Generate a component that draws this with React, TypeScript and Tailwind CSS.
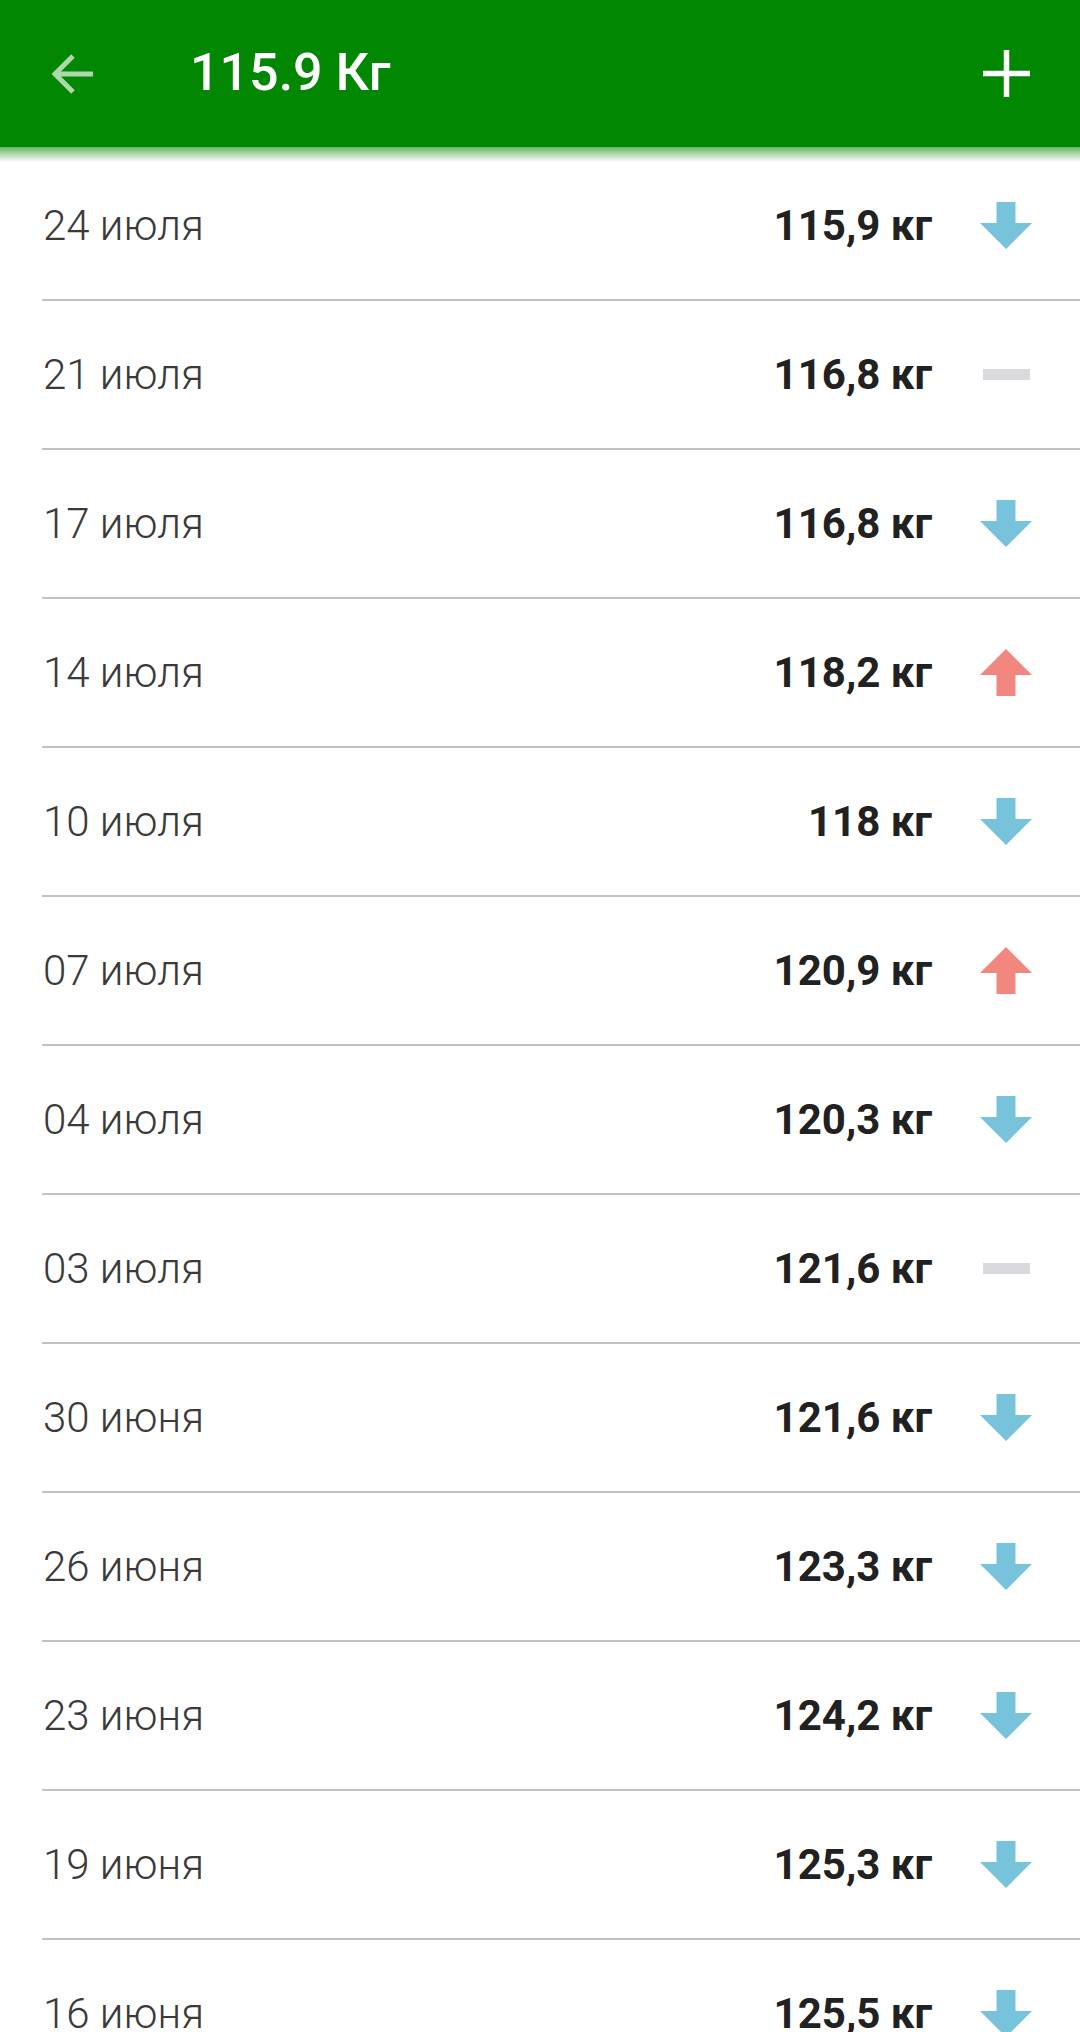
import React from 'react';

type Trend = 'down' | 'up' | 'same';

const entries: { date: string; weight: string; trend: Trend }[] = [
  { date: '24 июля', weight: '115,9 кг', trend: 'down' },
  { date: '21 июля', weight: '116,8 кг', trend: 'same' },
  { date: '17 июля', weight: '116,8 кг', trend: 'down' },
  { date: '14 июля', weight: '118,2 кг', trend: 'up' },
  { date: '10 июля', weight: '118 кг', trend: 'down' },
  { date: '07 июля', weight: '120,9 кг', trend: 'up' },
  { date: '04 июля', weight: '120,3 кг', trend: 'down' },
  { date: '03 июля', weight: '121,6 кг', trend: 'same' },
  { date: '30 июня', weight: '121,6 кг', trend: 'down' },
  { date: '26 июня', weight: '123,3 кг', trend: 'down' },
  { date: '23 июня', weight: '124,2 кг', trend: 'down' },
  { date: '19 июня', weight: '125,3 кг', trend: 'down' },
  { date: '16 июня', weight: '125,5 кг', trend: 'down' },
];

const TrendIcon: React.FC<{ trend: Trend }> = ({ trend }) => {
  if (trend === 'same') {
    return <div className="w-[47px] h-[11px] bg-[#d9d9de]" />;
  }
  // arrow is 52 wide, 47 tall: 19px stem, 45deg head
  return (
    <svg width="52" height="47" viewBox="0 0 52 47" className={trend === 'up' ? 'rotate-180' : ''}>
      <path d="M16.5 0 H35.5 V21 H52 L26 47 L0 21 H16.5 Z" fill={trend === 'up' ? '#f2877f' : '#78c3dc'} />
    </svg>
  );
};

export default function App() {
  return (
    <div className="w-[1080px] h-[2032px] overflow-hidden bg-white font-['Roboto',sans-serif]">
      <div className="relative z-10 h-[147px] bg-[#018701] flex items-center">
        <div className="w-[146px] h-full flex items-center justify-center">
          <svg width="42" height="42" viewBox="0 0 42 42" className="-ml-[1px]">
            <path d="M41 21 H4 M21 3 L3 21 L21 39" stroke="#ffffff" strokeOpacity="0.68" strokeWidth="5" fill="none" />
          </svg>
        </div>
        <h1 className="ml-[44px] text-[52px] font-medium text-white leading-none -mt-[1px]">115.9 Кг</h1>
        <div className="ml-auto mr-[50px] flex items-center">
          <svg width="47" height="47" viewBox="0 0 47 47">
            <path d="M23.5 0 V47 M0 23.5 H47" stroke="#ffffff" strokeWidth="5.5" fill="none" />
          </svg>
        </div>
        <div className="absolute left-0 right-0 top-full h-[15px] bg-gradient-to-b from-[#018701]/60 to-transparent" />
      </div>
      <div className="pt-[5px]">
        {entries.map((e, i) => (
          <div key={i}>
            <div className="h-[147px] flex items-center pl-[43px]">
              <span className="text-[42px] font-light text-[#3a3a3a] leading-none">{e.date}</span>
              <span className="ml-auto text-[42px] font-bold text-[#212121] leading-none">{e.weight}</span>
              <div className="w-[64px] ml-[42px] mr-[42px] flex items-center justify-center">
                <TrendIcon trend={e.trend} />
              </div>
            </div>
            <div className="ml-[42px] h-[2px] bg-[#c2c2c2]" />
          </div>
        ))}
      </div>
    </div>
  );
}
